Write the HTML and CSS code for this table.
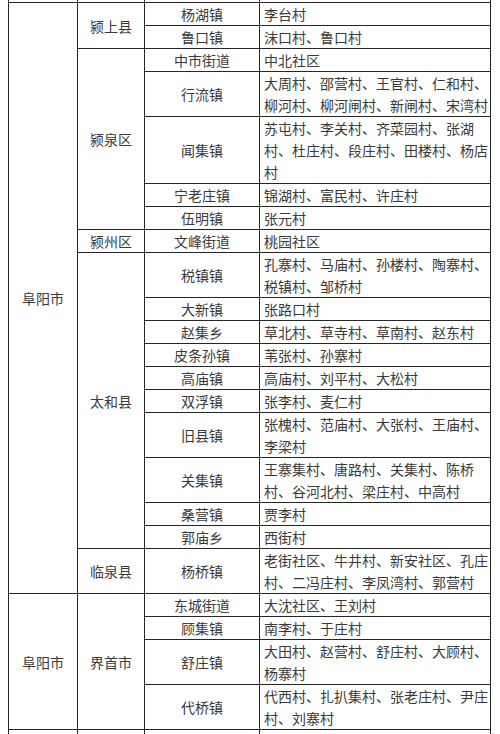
FILE: index.html
```html
<!DOCTYPE html>
<html lang="zh-CN">
<head>
<meta charset="utf-8">
<title>阜阳市 乡镇 村社区</title>
<link rel="stylesheet" href="styles.css">
</head>
<body>
<table class="grid">
  <colgroup>
    <col class="c-city">
    <col class="c-county">
    <col class="c-town">
    <col class="c-village">
  </colgroup>
  <tbody>
    <tr class="stub stub-top"><td></td><td></td><td></td><td></td></tr>
    <tr>
      <td class="ctr" rowspan="19">阜阳市</td>
      <td class="ctr" rowspan="2">颍上县</td>
      <td class="ctr">杨湖镇</td>
      <td class="vil">李台村</td>
    </tr>
    <tr><td class="ctr">鲁口镇</td><td class="vil">沫口村、鲁口村</td></tr>
    <tr>
      <td class="ctr" rowspan="5">颍泉区</td>
      <td class="ctr">中市街道</td>
      <td class="vil">中北社区</td>
    </tr>
    <tr><td class="ctr">行流镇</td><td class="vil">大周村、邵营村、王官村、仁和村、柳河村、柳河闸村、新闸村、宋湾村</td></tr>
    <tr><td class="ctr">闻集镇</td><td class="vil">苏屯村、李关村、齐菜园村、张湖村、杜庄村、段庄村、田楼村、杨店村</td></tr>
    <tr><td class="ctr">宁老庄镇</td><td class="vil">锦湖村、富民村、许庄村</td></tr>
    <tr><td class="ctr">伍明镇</td><td class="vil">张元村</td></tr>
    <tr><td class="ctr">颍州区</td><td class="ctr">文峰街道</td><td class="vil">桃园社区</td></tr>
    <tr>
      <td class="ctr" rowspan="10">太和县</td>
      <td class="ctr">税镇镇</td>
      <td class="vil">孔寨村、马庙村、孙楼村、陶寨村、税镇村、邹桥村</td>
    </tr>
    <tr><td class="ctr">大新镇</td><td class="vil">张路口村</td></tr>
    <tr><td class="ctr">赵集乡</td><td class="vil">草北村、草寺村、草南村、赵东村</td></tr>
    <tr><td class="ctr">皮条孙镇</td><td class="vil">苇张村、孙寨村</td></tr>
    <tr><td class="ctr">高庙镇</td><td class="vil">高庙村、刘平村、大松村</td></tr>
    <tr><td class="ctr">双浮镇</td><td class="vil">张李村、麦仁村</td></tr>
    <tr><td class="ctr">旧县镇</td><td class="vil">张槐村、范庙村、大张村、王庙村、李梁村</td></tr>
    <tr><td class="ctr">关集镇</td><td class="vil">王寨集村、唐路村、关集村、陈桥村、谷河北村、梁庄村、中高村</td></tr>
    <tr><td class="ctr">桑营镇</td><td class="vil">贾李村</td></tr>
    <tr><td class="ctr">郭庙乡</td><td class="vil">西街村</td></tr>
    <tr><td class="ctr">临泉县</td><td class="ctr">杨桥镇</td><td class="vil">老街社区、牛井村、新安社区、孔庄村、二冯庄村、李凤湾村、郭营村</td></tr>
    <tr>
      <td class="ctr" rowspan="4">阜阳市</td>
      <td class="ctr" rowspan="4">界首市</td>
      <td class="ctr">东城街道</td>
      <td class="vil">大沈社区、王刘村</td>
    </tr>
    <tr><td class="ctr">顾集镇</td><td class="vil">南李村、于庄村</td></tr>
    <tr><td class="ctr">舒庄镇</td><td class="vil">大田村、赵营村、舒庄村、大顾村、杨寨村</td></tr>
    <tr><td class="ctr">代桥镇</td><td class="vil">代西村、扎扒集村、张老庄村、尹庄村、刘寨村</td></tr>
    <tr class="stub stub-bottom"><td></td><td></td><td></td><td></td></tr>
  </tbody>
</table>
</body>
</html>
```

FILE: styles.css
```css
html, body {
  margin: 0;
  padding: 0;
  background: #ffffff;
}

body {
  padding-left: 8px;
  font-family: "Noto Sans CJK SC", "Noto Sans", "Liberation Sans", sans-serif;
  font-size: 14px;
  color: #3a3a3a;
  overflow: hidden;
}

.grid {
  border-collapse: collapse;
  table-layout: fixed;
  width: 482px;
}

.c-city { width: 69px; }
.c-county { width: 67px; }
.c-town { width: 115px; }
.c-village { width: 231px; }

.grid td {
  border: 1px solid #262626;
  line-height: 22px;
  padding: 0;
  vertical-align: middle;
}

.grid td.ctr {
  text-align: center;
}

.grid td.vil {
  text-align: left;
  padding: 0 1px 0 4px;
}

.stub td {
  height: 2px;
  line-height: 0;
  font-size: 0;
}

.stub-top td {
  border-top: none;
}

.stub-bottom td {
  height: 12px;
  border-bottom: none;
}
```
